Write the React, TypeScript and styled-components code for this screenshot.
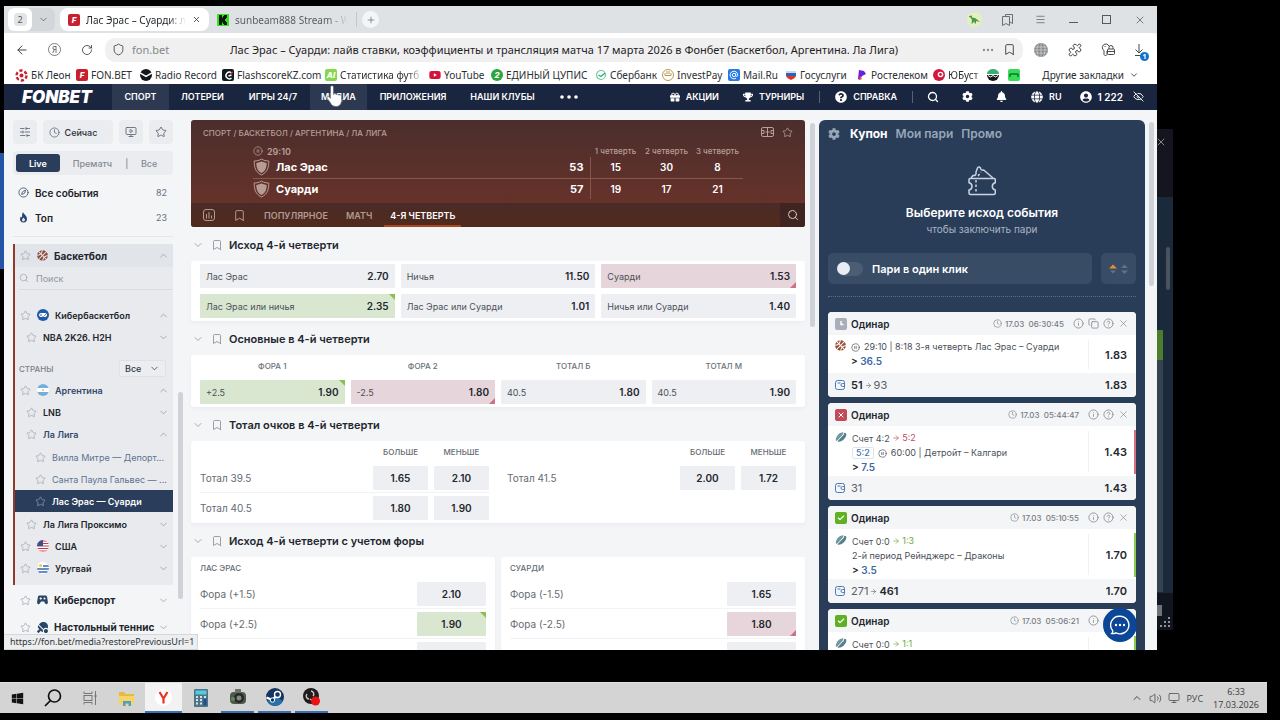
import React from 'react';
import styled, { createGlobalStyle, css } from 'styled-components';
import {
  SlidersHorizontal, Clock, Star, Compass, ChevronUp, ChevronDown, Search, Bookmark, EyeOff, Info, Copy, X, ArrowLeft,
  RotateCw, Shield, Menu, Minus, Square, Puzzle, MonitorPlay, CirclePause, Plus, Ellipsis, Check,
  ArrowRight, CircleHelp, Volume2, Monitor,
} from 'lucide-react';
import { FaGift, FaTrophy, FaQuestionCircle, FaUserCircle, FaCog, FaBell, FaGlobe, FaGamepad, FaTableTennis, FaBasketballBall, FaWindows, FaYoutube } from 'react-icons/fa';

const Global = createGlobalStyle`
  * { box-sizing: border-box; }
  body { margin: 0; background: #000; font-family: Inter, "Liberation Sans", sans-serif; color: #23272e; }
  button, input, select { font: inherit; color: inherit; border: 0; padding: 0; margin: 0; background: none; }
  a { color: inherit; text-decoration: none; }
  svg { display: block; flex: none; }
`;

/* ---------- desktop ---------- */

const Desktop = styled.div`
  position: relative;
  display: flex;
  flex-direction: column;
  height: 100vh;
  overflow: hidden;
`;
const BlueWindow = styled.div`
  position: absolute;
  left: 0;
  top: 153px;
  width: 5px;
  height: 116px;
  background: #2456a6;
`;
const BackWindow = styled.div`
  position: absolute;
  right: 107px;
  top: 129px;
  width: 90px;
  height: 501px;
  display: flex;
  flex-direction: column;
  align-items: flex-end;
  background: linear-gradient(#14151f 0 68px, #1b2a3b 68px 464px, #11151e 464px);
  color: #a9adb3;
`;
const BackClose = styled.div` padding: 7px 6px 0 0; height: 118px; `;
const BackThumb = styled.div` width: 4px; height: 43px; margin-right: 3px; border-radius: 2px; background: #4b525d; `;
const BackGreen = styled.div` width: 6px; height: 30px; margin: 40px 10px 0 0; background: #4c7d2c; `;
const BackStrip = styled.div` width: 6px; height: 232px; margin-right: 10px; background: #35424f; `;
const BackKey = styled.div` width: 5px; height: 11px; margin: 13px 11px 0 0; background: #6d7379; `;

const Browser = styled.main`
  position: relative;
  flex: 1;
  min-height: 0;
  margin: 6px 123px 0 4px;
  display: flex;
  flex-direction: column;
  overflow: hidden;
  background: #f3f5f7;
`;

/* ---------- browser chrome ---------- */

const TabStrip = styled.div`
  display: flex;
  align-items: center;
  height: 27px;
  padding: 0 9px 0 4px;
  background: #dee2e4;
  font: 10px "Noto Sans", "Liberation Sans", sans-serif;
  color: #55595d;
`;
const TabCount = styled.div`
  display: flex;
  width: 47px;
  height: 23px;
  border-radius: 6px;
  background: #d3d7da;
`;
const CountButton = styled.button`
  display: grid;
  place-items: center;
  width: 24px;
  border-radius: 6px;
  background: #fff;
  font-size: 9px;
  span { display: grid; place-items: center; width: 13px; height: 13px; border-radius: 4px; background: #e2e4e6; }
`;
const CountArrow = styled.button` display: grid; place-items: center; flex: 1; `;
const Tab = styled.a<{ $on?: boolean }>`
  display: flex;
  align-items: center;
  gap: 6px;
  width: ${p => (p.$on ? 149 : 147)}px;
  height: 23px;
  margin-left: ${p => (p.$on ? 5 : 0)}px;
  padding: 0 8px;
  border-radius: 8px;
  color: ${p => (p.$on ? '#26292c' : '#5a5e62')};
  ${p => p.$on && 'background: #fff;'}
`;
const Fade = styled.span`
  flex: 1;
  min-width: 0;
  overflow: hidden;
  white-space: nowrap;
  mask-image: linear-gradient(90deg, #000 82%, transparent);
`;
const NewTab = styled.button`
  display: grid;
  place-items: center;
  width: 17px;
  height: 17px;
  margin-left: 5px;
  border-radius: 50%;
  background: #f4f5f6;
`;
const TabDivider = styled.span` width: 1px; height: 15px; background: #c3c7ca; `;
const WindowButtons = styled.div`
  display: flex;
  align-items: center;
  gap: 16px;
  margin-left: auto;
  button { display: grid; place-items: center; width: 17px; height: 17px; }
`;
const AddressRow = styled.div`
  display: flex;
  align-items: center;
  height: 33px;
  padding-left: 9px;
  background: #fff;
  border-radius: 0 6px 0 0;
  color: #3b3f43;
  font: 11px "Noto Sans", "Liberation Sans", sans-serif;
`;
const ToolButton = styled.button<{ $w?: number }>`
  position: relative;
  display: grid;
  place-items: center;
  width: ${p => p.$w ?? 33}px;
  height: 24px;
`;
const AddressBar = styled.label`
  display: flex;
  align-items: center;
  flex: 1;
  height: 24px;
  margin-left: 8px;
  padding: 0 7px;
  border-radius: 10px;
  background: #f0f0f0;
`;
const Host = styled.span` display: flex; align-items: center; gap: 7px; width: 90px; color: #84878a; `;
const AddressInput = styled.input`
  flex: 1;
  min-width: 0;
  text-align: center;
  color: #1f2225;
`;
const AddressTools = styled.span` display: flex; justify-content: flex-end; align-items: center; gap: 8px; width: 90px; `;
const Badge = styled.span`
  position: absolute;
  right: 8px;
  bottom: 1px;
  width: 9px;
  height: 9px;
  border-radius: 50%;
  background: #1273cc;
  color: #fff;
  font-size: 7px;
  line-height: 9px;
  font-weight: 700;
`;
const Bookmarks = styled.nav`
  display: flex;
  align-items: center;
  height: 18px;
  padding: 0 18px 0 11px;
  background: #fff;
  font: 10px "Noto Sans", "Liberation Sans", sans-serif;
  color: #2c2f33;
`;
const Mark = styled.a<{ $w: number }>`
  display: flex;
  align-items: center;
  gap: 3px;
  width: ${p => p.$w}px;
  padding-right: 6px;
  white-space: nowrap;
`;
const MoreMarks = styled.a` display: flex; align-items: center; gap: 5px; margin-left: auto; `;
const Tile = styled.span<{ $bg: string; $round?: boolean; $size?: number }>`
  display: grid;
  place-items: center;
  flex: none;
  width: ${p => p.$size ?? 12}px;
  height: ${p => p.$size ?? 12}px;
  border-radius: ${p => (p.$round ? '50%' : '2px')};
  background: ${p => p.$bg};
  color: #fff;
  font: italic 800 8px/12px Inter, sans-serif;
`;

/* ---------- site navigation ---------- */

const Nav = styled.nav`
  display: flex;
  align-items: center;
  height: 26px;
  padding-right: 13px;
  background: #1a2640;
  color: #fff;
  font-size: 9px;
  font-weight: 600;
`;
const Logo = styled.a`
  width: 108px;
  padding-left: 18px;
  font-size: 17px;
  font-weight: 900;
  font-style: italic;
`;
const NavItem = styled.a<{ $w: number; $on?: boolean }>`
  display: grid;
  place-items: center;
  width: ${p => p.$w}px;
  height: 26px;
  padding-bottom: 1px;
  ${p => p.$on && 'background: #2c3950;'}
`;
const NavRight = styled.div`
  display: flex;
  align-items: center;
  margin-left: auto;
  padding-bottom: 1px;
`;
const NavLink = styled.a<{ $gap: number }>`
  display: flex;
  align-items: center;
  gap: 6px;
  margin-left: ${p => p.$gap}px;
`;
const Balance = styled.span` margin-right: 4px; font-size: 10px; `;
const NavLine = styled.span<{ $gap: number }>` width: 1px; height: 12px; margin-left: ${p => p.$gap}px; background: #56617a; `;
const HandCursor = styled.svg` position: absolute; left: 322px; top: 78px; `;

/* ---------- page body ---------- */

const Body = styled.div`
  display: flex;
  flex: 1;
  min-height: 0;
  padding-left: 9px;
`;
const Rail = styled.div<{ $top: number; $l: number; $r: number }>`
  flex: none;
  width: 5px;
  margin: 0 ${p => p.$r}px 0 ${p => p.$l}px;
  padding-top: ${p => p.$top}px;
`;
const Thumb = styled.div<{ $h: number }>` height: ${p => p.$h}px; border-radius: 3px; background: #cfd2d8; `;

const Side = styled.aside`
  flex: none;
  width: 160px;
  padding-top: 10px;
  color: #22262c;
`;
const SideTools = styled.div` display: flex; gap: 6px; `;
const SideTool = styled.button<{ $wide?: boolean }>`
  display: flex;
  align-items: center;
  justify-content: center;
  gap: 5px;
  ${p => (p.$wide ? 'flex: 1; padding-right: 10px;' : 'width: 24px;')}
  height: 24px;
  border-radius: 4px;
  background: #eaecf0;
  color: #5d6675;
  font-size: 9px;
  font-weight: 500;
  span { color: #2d3138; }
`;
const Segments = styled.div`
  display: flex;
  align-items: center;
  height: 24px;
  margin-top: 7px;
  padding: 3px;
  border-radius: 4px;
  background: #eaecf0;
  color: #858a93;
  font-size: 9px;
  font-weight: 500;
`;
const Segment = styled.button<{ $w: number; $on?: boolean }>`
  width: ${p => p.$w}px;
  height: 18px;
  border-radius: 3px;
  ${p => p.$on && 'background: #2a3e5b; color: #fff; font-weight: 600;'}
`;
const SideTop = styled.div` padding-top: 5px; height: 62px; border-bottom: 1px solid #e3e6ea; margin-bottom: 7px; `;
const TopRow = styled.a`
  display: flex;
  align-items: center;
  gap: 6px;
  height: 25px;
  padding: 0 6px 0 5px;
  font-size: 10px;
  font-weight: 600;
  color: #1f2329;
  small { margin-left: auto; font-size: 9px; font-weight: 400; color: #6b7079; }
`;
const Tree = styled.section`
  padding-bottom: 6px;
  border-left: 2px solid #8f3a2d;
  background: #e8eaee;
`;
const TreeRow = styled.div<{ $indent?: number; $tone?: 'blue' | 'soft' | 'active'; $h?: number; $big?: boolean }>`
  display: flex;
  align-items: center;
  gap: 6px;
  height: ${p => p.$h ?? 22}px;
  padding: 0 4px 0 ${p => 5 + (p.$indent ?? 0)}px;
  font-size: 9px;
  font-weight: 600;
  color: #22262c;
  a { flex: 1; min-width: 0; white-space: nowrap; }
  > svg:first-child { color: #a7acb5; }
  > svg:last-child { color: #8f959f; }
  ${p => p.$big && 'font-size: 10px; font-weight: 700;'}
  ${p => p.$tone === 'blue' && 'color: #33496b;'}
  ${p => p.$tone === 'soft' && 'color: #5f728f; font-weight: 400;'}
  ${p => p.$tone === 'active' && css`background: #2a3e5b; color: #fff; > svg:first-child { color: #8494ab; }`}
`;
const TreeHead = styled.div` background: #e1e4e9; `;
const SearchRow = styled.label`
  display: flex;
  align-items: center;
  gap: 7px;
  height: 23px;
  margin: 0 0 14px 4px;
  border-bottom: 1px solid #d9dce2;
  color: #a3a8b0;
  font-size: 9px;
  input { flex: 1; min-width: 0; }
  input::placeholder { color: #92979f; opacity: 1; }
`;
const Countries = styled.div`
  display: flex;
  align-items: center;
  justify-content: space-between;
  height: 31px;
  padding: 10px 7px 0 4px;
  font-size: 8px;
  font-weight: 500;
  color: #7a808a;
`;
const SelectBox = styled.label`
  display: flex;
  align-items: center;
  gap: 4px;
  height: 17px;
  padding: 0 5px;
  border: 1px solid #dee1e6;
  border-radius: 2px;
  background: #ebedf1;
  font-size: 9px;
  font-weight: 500;
  color: #33373e;
  select { appearance: none; width: 20px; }
`;
const Nested = styled.div` padding: 1px 0; `;
const Flag = styled.svg` border-radius: 50%; `;
const StatusUrl = styled.div`
  position: absolute;
  left: 0;
  bottom: 0;
  height: 16px;
  padding: 0 3px 0 6px;
  border: 1px solid #d5d8db;
  border-left: 0;
  background: #eceef0;
  font: 9px/14px "Noto Sans", "Liberation Sans", sans-serif;
  color: #303336;
`;

/* ---------- event ---------- */

const Event = styled.section` flex: 1; min-width: 0; padding-top: 10px; `;
const EventHead = styled.header`
  display: flex;
  flex-direction: column;
  height: 107px;
  border-radius: 3px;
  overflow: hidden;
  background: linear-gradient(#4b2e2c, #66322a 83px);
  color: #fff;
`;
const Crumbs = styled.div`
  display: flex;
  align-items: center;
  justify-content: space-between;
  height: 26px;
  padding: 0 12px;
  font-size: 8px;
  font-weight: 500;
  color: #b79e99;
  div { display: flex; gap: 8px; }
`;
const Score = styled.table`
  flex: 1;
  margin: 0 62px 4px;
  border-collapse: collapse;
  font-size: 10px;
  font-weight: 600;
  table-layout: fixed;
  th, td { padding: 0; }
  thead { height: 12px; font-size: 8px; color: #b79e99; }
  thead th { font-weight: 500; }
  thead th:nth-child(2) { width: 36px; }
  thead th:nth-child(n+3) { width: 51px; }
  tbody td { text-align: center; height: 21px; }
  tbody th { text-align: left; font-size: 11px; font-weight: 700; }
  tbody tr:first-child > * { border-bottom: 1px solid #87554c; }
  tbody td:nth-child(2) { text-align: right; padding-right: 6px; font-size: 11px; font-weight: 700; border-right: 1px solid #87554c; }
`;
const Inline = styled.span<{ $gap?: number }>` display: flex; align-items: center; gap: ${p => p.$gap ?? 4}px; `;
const GameClock = styled(Inline)` font-size: 9px; font-weight: 600; `;
const MarketTabs = styled.div`
  display: flex;
  align-items: center;
  height: 24px;
  padding-left: 12px;
  background: linear-gradient(#4b2b28, #502a1b);
  color: #b39a92;
  font-size: 9px;
  font-weight: 600;
`;
const MarketTab = styled.button<{ $on?: boolean }>`
  height: 24px;
  margin-left: 6px;
  padding: 2px 6px 0;
  border-bottom: 2px solid ${p => (p.$on ? '#a84a1e' : 'transparent')};
  color: ${p => (p.$on ? '#fff' : 'inherit')};
`;
const TabIcon = styled.button`
  width: 12px;
  margin-right: 18px;
  & + & { margin-right: 7px; }
`;
const TabSearch = styled.button`
  display: grid;
  place-items: center;
  width: 25px;
  height: 24px;
  margin-left: auto;
  background: #402422;
  color: #d8c9c5;
`;
const MarketTitle = styled.h2`
  display: flex;
  align-items: center;
  height: 34px;
  margin: 0;
  padding: 2px 0 0 1px;
  font-size: 11px;
  font-weight: 600;
  color: #23272e;
  svg { color: #8b9097; }
  svg + svg { margin: 0 6px 0 7px; }
`;
const Card = styled.div`
  flex: 1;
  padding: 0 9px;
  border-radius: 3px;
  background: #fff;
  box-shadow: 0 2px 4px #1a26400a;
`;
const OddsGrid = styled.div<{ $cols: number }>`
  display: grid;
  grid-template-columns: repeat(${p => p.$cols}, 1fr);
  gap: 6px;
  padding: 3px 0;
`;
const Labels = styled.div`
  display: grid;
  grid-template-columns: repeat(4, 1fr);
  gap: 6px;
  height: 22px;
  align-items: center;
  text-align: center;
  font-size: 8px;
  font-weight: 500;
  color: #6c7178;
`;
const Odd = styled.button<{ $move?: 'up' | 'down'; $solo?: boolean }>`
  position: relative;
  display: flex;
  align-items: center;
  justify-content: ${p => (p.$solo ? 'center' : 'space-between')};
  width: 100%;
  height: 24px;
  padding: 0 6px;
  border-radius: 1px;
  overflow: hidden;
  background: #eeeff2;
  color: #4b5057;
  font-size: 9px;
  b { font-size: 10px; font-weight: 600; color: #23272e; }
  ${p => p.$move === 'up' && css`background: #d9e7d1; &::after { content: ''; position: absolute; right: 0; top: 0; border: 3px solid; border-color: #8cbf52 #8cbf52 transparent transparent; }`}
  ${p => p.$move === 'down' && css`background: #e6d5da; &::after { content: ''; position: absolute; right: 0; bottom: 0; border: 3px solid; border-color: transparent #cc7285 #cc7285 transparent; }`}
`;
const Pair = styled.div<{ $gap: number }>` display: flex; gap: ${p => p.$gap}px; align-items: flex-start; `;
const OddsTable = styled.table<{ $w: number }>`
  flex: 1;
  width: 100%;
  border-collapse: separate;
  border-spacing: 0;
  font-size: 10px;
  color: #666b72;
  th, td { padding: 0; font-weight: 400; }
  thead th { height: 22px; font-size: 8px; font-weight: 500; }
  tbody th { text-align: left; }
  tbody tr > * { height: 30px; border-bottom: 1px solid #f2f3f5; }
  tbody tr:last-child > * { border-color: transparent; }
  td, thead th:not(:first-child) { width: ${p => p.$w + 6}px; padding-left: 6px; }
  thead th:first-child { text-align: left; }
`;

/* ---------- coupon ---------- */

const Coupon = styled.aside`
  flex: none;
  width: 326px;
  margin-top: 10px;
  padding: 0 9px;
  border-radius: 6px 6px 0 0;
  background: #293d59;
  color: #fff;
`;
const CouponTabs = styled.div`
  display: flex;
  align-items: center;
  gap: 8px;
  height: 27px;
  font-size: 12px;
  font-weight: 600;
  color: #98a5b6;
  svg { margin-right: 2px; }
  button[aria-current] { color: #fff; font-weight: 700; }
`;
const Empty = styled.div`
  display: flex;
  flex-direction: column;
  align-items: center;
  height: 106px;
  padding-top: 19px;
  color: #a9b5c4;
  font-size: 10px;
  h3 { margin: 8px 0 1px; font-size: 12px; line-height: 18px; font-weight: 600; color: #fff; }
`;
const OneClick = styled.div`
  display: flex;
  gap: 9px;
  padding-bottom: 12px;
  border-bottom: 1px dotted #5d6f87;
`;
const OneClickBox = styled.label`
  display: flex;
  align-items: center;
  gap: 9px;
  flex: 1;
  height: 31px;
  padding: 0 9px;
  border-radius: 5px;
  background: #384c66;
  font-size: 11px;
  font-weight: 600;
`;
const Toggle = styled.input`
  appearance: none;
  width: 26px;
  height: 14px;
  border-radius: 7px;
  background: #4b5d75;
  &::before { content: ''; display: block; width: 13px; height: 13px; border-radius: 50%; background: #e8edf5; }
`;
const SortButton = styled.button`
  display: flex;
  align-items: center;
  justify-content: center;
  width: 35px;
  border-radius: 5px;
  background: #384c66;
`;
const Bets = styled.div`
  display: flex;
  flex-direction: column;
  gap: 6px;
  padding-top: 15px;
`;
const Bet = styled.article` border-radius: 4px; overflow: hidden; background: #fff; color: #23272e; `;
const BetBar = styled.div`
  display: flex;
  align-items: center;
  gap: 4px;
  height: 23px;
  padding: 0 7px;
  background: #f4f5f7;
  font-size: 10px;
  font-weight: 600;
  svg { color: #858a92; }
  time { display: flex; align-items: center; gap: 3px; margin-left: auto; margin-right: 5px; font-size: 8px; font-weight: 500; color: #777c85; white-space: pre; }
`;
const BetMark = styled.span<{ $c: string }>`
  display: grid;
  place-items: center;
  width: 12px;
  height: 12px;
  border-radius: 2px;
  background: ${p => p.$c};
  svg { color: #fff; }
`;
const BetMain = styled.div<{ $h: number; $side?: string }>`
  display: flex;
  height: ${p => p.$h}px;
  padding: 5px 0 0 7px;
  ${p => p.$side && css`background: linear-gradient(${p.$side}, ${p.$side}) right 4px / 2px 44px no-repeat;`}
`;
const BetLines = styled.div`
  flex: 1;
  padding-left: 5px;
  font-size: 9px;
  line-height: 14px;
  color: #4a4f57;
  strong { display: block; font-size: 10px; font-weight: 600; color: #3d67a5; }
  strong i { color: #23272e; font-style: normal; }
`;
const Shift = styled.span<{ $c: string }>` display: inline-flex; align-items: center; gap: 2px; color: ${p => p.$c}; `;
const Chip = styled.span` padding: 0 3px; border: 1px solid #e0e4ea; border-radius: 2px; line-height: 10px; color: #4476b8; font-weight: 500; `;
const BetOdd = styled.div`
  display: flex;
  align-items: center;
  justify-content: flex-end;
  width: 48px;
  padding-right: 9px;
  margin-bottom: 4px;
  border-left: 1px solid #f0f1f3;
  font-size: 11px;
  font-weight: 600;
`;
const BetFoot = styled(BetBar)`
  justify-content: space-between;
  height: 24px;
  padding-right: 9px;
  font-size: 11px;
  svg { color: #4a78bb; }
  span span { display: flex; align-items: center; gap: 2px; }
  span span svg { color: #5b6068; }
  i { font-style: normal; font-weight: 400; color: #5b6068; }
`;
const ChatButton = styled.button`
  position: absolute;
  right: 20px;
  bottom: 8px;
  display: grid;
  place-items: center;
  width: 34px;
  height: 34px;
  border-radius: 50%;
  background: #0b4697;
`;

/* ---------- taskbar ---------- */

const Taskbar = styled.footer`
  display: flex;
  align-items: center;
  height: 31px;
  margin: 32px 13px 7px 0;
  padding-right: 8px;
  background: #d4d4d4;
  border-top: 1px solid #e2e2e2;
  font: 9px "Open Sans", "Liberation Sans", sans-serif;
  color: #3c3c3c;
`;
const Task = styled.button<{ $run?: boolean; $on?: boolean }>`
  display: grid;
  place-items: center;
  width: ${p => (p.$run ? 33 : 37)}px;
  height: 30px;
  margin: 0 ${p => (p.$run ? 2 : 0)}px;
  ${p => p.$on && 'background: #f2f2f2;'}
  ${p => (p.$run || p.$on) && 'border-bottom: 2px solid #3c70b5;'}
  &:first-child { width: 34px; }
`;
const Tray = styled.div` display: flex; align-items: center; gap: 6px; margin-left: auto; color: #4a4a4a; `;
const DateTime = styled.time` margin-left: 4px; line-height: 13px; text-align: center; color: #3c3c3c; `;

/* ---------- drawings ---------- */

const FlagOf = ({ name }: { name: 'ar' | 'us' | 'uy' }) => (
  <Flag width="12" height="12" viewBox="0 0 12 12">
    <rect width="12" height="12" fill="#fff" />
    {name === 'ar' && <><rect width="12" height="4" fill="#72aee0" /><rect y="8" width="12" height="4" fill="#72aee0" /><circle cx="6" cy="6" r="1" fill="#e8b740" /></>}
    {name === 'us' && <><path d="M0 1h12M0 3.5h12M0 6h12M0 8.5h12M0 11h12" stroke="#c53a4b" strokeWidth="1.2" /><rect width="6" height="6" fill="#3c4f86" /></>}
    {name === 'uy' && <><path d="M0 4h12M0 7h12M0 10h12" stroke="#3768b4" strokeWidth="1.4" /><rect width="6" height="5.5" fill="#fff" /><circle cx="3.5" cy="3.5" r="1.5" fill="#f0c93c" /></>}
  </Flag>
);
const Cyber = () => (
  <Tile $bg="#1f5ba8" $round><FaGamepad size={8} /></Tile>
);
const Pad = () => (
  <svg width="11" height="10" viewBox="0 0 11 10"><path d="M2.500 .5h6c1 0 1.400.6 1.600 1.500l.8 5c.2 2-1.600 3-2.700 1.600L7 6.500H4L2.800 8.600C1.700 10 0 9 .1 7l.8-5C1.100 1.100 1.500.5 2.500.5z" fill="#2b4568" /><path d="M2.500 3.500h2.400M3.700 2.300v2.400" stroke="#fff" strokeWidth=".9" /><circle cx="7.500" cy="3.500" r="1" fill="#fff" /></svg>
);
const Puck = () => (
  <svg width="12" height="12" viewBox="0 0 12 12"><path d="M.8 9.200C.8 5.500 4 1.500 8.300 1.300c.4 1-.5 2.600-1.800 3.800L2.300 9.600c-.5.400-1.500.3-1.500-.4z" fill="#6f98a1" /><path d="M3 10.800c-.6-.3-.2-1 .5-1.500l4-4.200c1-1.100 1.700-2 1.700-3.200 1.600-.2 2.300.7 2.100 2.200-.6 3.600-4.800 7.200-8.300 6.700z" fill="#557f8c" /></svg>
);
const TeamShield = () => (
  <svg width="17" height="18" viewBox="0 0 17 18"><path d="M8.500 1C6.500 2.500 3.500 3 1.200 3c0 6 1 11 7.300 14 6.300-3 7.300-8 7.300-14-2.300 0-5.300-.5-7.300-2z" fill="none" stroke="#b79c95" /><path d="M8.500 3.300C7 4.300 5 4.700 3.300 4.900c.1 4.500 1.200 8 5.200 10.200 4-2.200 5.100-5.700 5.200-10.200C12 4.700 10 4.300 8.500 3.300z" fill="#b79c95" /></svg>
);
const Ticket = () => (
  <svg width="28" height="30" viewBox="0 0 28 30" fill="none" stroke="#c9d4e2" strokeWidth="1.500" strokeLinejoin="round">
    <path d="M2 12.500h24c1 0 1.300.5 1.300 1.300v3c-4 1-4 6.200 0 7.200v3c0 1-.5 1.500-1.500 1.500H2.500C1.500 28.500 1 28 1 27v-3c4-1 4-6.200 0-7.200v-3c0-.8.300-1.300 1-1.300z" />
    <path d="M3 12l2-2.500c2 .5 3.600-1 3-3.500L9.500 2c1-1.200 2-1.200 3 0 0 2 2 2.500 3.200 2L25 12" /><path d="M8 14v13M10 10l3-4" strokeDasharray="2.500 2" />
  </svg>
);
const Stats = () => (
  <svg width="12" height="12" viewBox="0 0 12 12" fill="none" stroke="currentColor"><rect x=".5" y=".5" width="11" height="11" rx="2.500" /><path d="M3.500 5v4.500M6 3v6.500M8.500 6.500v3" /></svg>
);
const Field = () => (
  <svg width="13" height="10" viewBox="0 0 13 10" fill="none" stroke="currentColor"><rect x=".5" y=".5" width="12" height="9" rx="1.500" /><path d="M6.500 .5v9M.5 3.500h2.500v3H.5M12.500 3.500H10v3h2.500M4.500 5h4" /></svg>
);
const ChatIcon = () => (
  <svg width="20" height="20" viewBox="0 0 20 20"><path d="M10 1.200a8.800 8.800 0 1 1-4 16.600c-1.200.7-2.800 1-4.300.8.9-1 1.200-2 1-3A8.800 8.800 0 0 1 10 1.200z" fill="none" stroke="#fff" strokeWidth="1.400" /><circle cx="6" cy="10" r="1.200" fill="#fff" /><circle cx="10" cy="10" r="1.200" fill="#fff" /><circle cx="14" cy="10" r="1.200" fill="#fff" /></svg>
);
const WalletIcon = () => (
  <svg width="10" height="10" viewBox="0 0 10 10" fill="none" stroke="currentColor"><rect x=".5" y=".5" width="9" height="9" rx="2" /><path d="M2.500 3h3M9.500 3.500H7.500a1.500 1.500 0 0 0 0 3h2" /></svg>
);
const HelpBubble = () => <CircleHelp size={11} strokeWidth={1.8} />;
const StarIcon = ({ size = 11 }: { size?: number }) => <Star size={size} strokeWidth={1.8} />;
const Down = () => <ChevronDown size={11} strokeWidth={1.6} />;
const Up = () => <ChevronUp size={11} strokeWidth={1.6} />;

/* ---------- sections ---------- */

const Chrome = () => (
  <>
    <TabStrip>
      <TabCount>
        <CountButton aria-label="Вкладки"><span>2</span></CountButton>
        <CountArrow aria-label="Список"><ChevronDown size={11} strokeWidth={1.6} /></CountArrow>
      </TabCount>
      <Tab href="#" $on><Tile $bg="#c8202f">F</Tile><Fade>Лас Эрас – Суарди: ла</Fade><X size={9} /></Tab>
      <Tab href="#">
        <svg width="12" height="12" viewBox="0 0 12 12"><rect width="12" height="12" fill="#39e01f" /><path d="M2 1h3v2.500h1V2h1V1h3v3H9v1H8v2h1v1h1v3H7v-1H6V8.500H5V11H2z" fill="#0b1a0b" /></svg>
        <Fade>sunbeam888 Stream - Wa</Fade>
      </Tab>
      <TabDivider />
      <NewTab aria-label="Новая вкладка"><Plus size={10} strokeWidth={1.500} /></NewTab>
      <WindowButtons>
        <button aria-label="Профиль"><Tile $bg="#e5efbf" $round $size={15}><svg width="11" height="9" viewBox="0 0 11 9"><path d="M0 1l3-.5v2L6 3l2 1.500 3 2.500-4-1v2.500H6L5 6.500 3.500 8.500h-1L3 5 1.500 2.500 0 2z" fill="#4a9a4b" /></svg></Tile></button>
        <button aria-label="Коллекции"><svg width="11" height="12" viewBox="0 0 11 12" fill="none" stroke="#6b6f73"><path d="M3.500 2.500V.5h7v9l-2.500-1.500M.5 2.500h7v9L4 9.500.5 11.500z" /></svg></button>
        <button aria-label="Меню"><Menu size={11} strokeWidth={1.5} /></button>
        <button aria-label="Свернуть"><svg width="9" height="9" viewBox="0 0 9 9"><path d="M0 7.500h9" stroke="currentColor" /></svg></button>
        <button aria-label="Развернуть"><svg width="9" height="9" viewBox="0 0 9 9"><rect x=".5" y=".5" width="8" height="8" fill="none" stroke="currentColor" /></svg></button>
        <button aria-label="Закрыть"><X size={12} strokeWidth={1.5} /></button>
      </WindowButtons>
    </TabStrip>
    <AddressRow>
      <ToolButton $w={18} aria-label="Назад"><ArrowLeft size={14} strokeWidth={1.7} /></ToolButton>
      <ToolButton $w={46} aria-label="Яндекс"><svg width="13" height="13" viewBox="0 0 13 13"><circle cx="6.500" cy="6.500" r="6" fill="none" stroke="#7b7e82" /><text x="6.500" y="9.500" fontSize="8" textAnchor="middle" fill="#4b4e52">Я</text></svg></ToolButton>
      <ToolButton $w={20} aria-label="Обновить"><RotateCw size={12} strokeWidth={1.7} /></ToolButton>
      <AddressBar>
        <Host><Shield size={13} strokeWidth={1.7} color="#4b4e52" />fon.bet</Host>
        <AddressInput aria-label="Адрес" defaultValue="Лас Эрас – Суарди: лайв ставки, коэффициенты и трансляция матча 17 марта 2026 в Фонбет (Баскетбол, Аргентина. Ла Лига)" />
        <AddressTools><Ellipsis size={14} color="#85888b" /><Bookmark size={13} strokeWidth={1.7} /></AddressTools>
      </AddressBar>
      <ToolButton $w={35} aria-label="Язык"><svg width="14" height="14" viewBox="0 0 14 14"><circle cx="7" cy="7" r="7" fill="#86898c" /><path d="M0 7h14M7 0v14M1 4h12M1 10h12M4.500 1c-2 4-2 8 0 12M9.500 1c2 4 2 8 0 12" stroke="#d6d8da" strokeWidth=".7" fill="none" /></svg></ToolButton>
      <ToolButton aria-label="Расширения"><Puzzle size={14} strokeWidth={1.7} /></ToolButton>
      <ToolButton aria-label="Пароли"><svg width="14" height="14" viewBox="0 0 14 14" fill="none" stroke="#44474b"><path d="M3 7.500A3.500 3.500 0 1 1 8 3M3 7.500v4l1.500 1.500 1.500-1.500V8M3.500 3.500h1" /><rect x="6.500" y="6" width="7" height="5.500" rx="1" /><path d="M8 6V4.500A2 2 0 0 1 12 4.500V6M6.500 8.500h7" /></svg></ToolButton>
      <ToolButton aria-label="Загрузки"><svg width="11" height="13" viewBox="0 0 11 13" fill="none" stroke="#44474b"><path d="M4 1v9M.5 6.500L4 10l3.500-3.500M0 12.500h6" /></svg><Badge>1</Badge></ToolButton>
    </AddressRow>
    <Bookmarks>
      <Mark href="#" $w={61}><svg width="13" height="13" viewBox="0 0 13 13"><circle cx="6.500" cy="6.500" r="5" fill="none" stroke="#c9202f" strokeWidth="2.400" strokeDasharray="3.200 2" /><circle cx="6.500" cy="6.500" r="2" fill="#c9202f" /></svg>БК Леон</Mark>
      <Mark href="#" $w={64}><Tile $bg="#c8202f">F</Tile>FON.BET</Mark>
      <Mark href="#" $w={82}><svg width="12" height="12" viewBox="0 0 12 12"><circle cx="6" cy="6" r="6" fill="#15181b" /><path d="M0 4l6 3.500L12 4" stroke="#fff" strokeWidth="1.500" fill="none" /></svg>Radio Record</Mark>
      <Mark href="#" $w={103}><Tile $bg="#0f1c24"><svg width="9" height="9" viewBox="0 0 9 9"><path d="M7.500 2A3.300 3.300 0 1 0 7.500 7M4.500 5l3-1" stroke="#fff" strokeWidth="1.500" fill="none" /><path d="M6 3l3-2" stroke="#d8263a" strokeWidth="1.400" /></svg></Tile>FlashscoreKZ.com</Mark>
      <Mark href="#" $w={104}><Tile $bg="#86d84a">AI</Tile><Fade>Статистика футб</Fade></Mark>
      <Mark href="#" $w={62}><FaYoutube size={12} color="#d7123a" />YouTube</Mark>
      <Mark href="#" $w={104}><Tile $bg="#2aa63c" $round>2</Tile>ЕДИНЫЙ ЦУПИС</Mark>
      <Mark href="#" $w={67}><svg width="12" height="12" viewBox="0 0 12 12" fill="none" strokeWidth="1.200"><circle cx="6" cy="6" r="4.500" stroke="#6cc7b4" /><path d="M3.500 6L6 7.500 10 4" stroke="#37ab4b" /></svg>Сбербанк</Mark>
      <Mark href="#" $w={66}><svg width="12" height="12" viewBox="0 0 12 12" fill="none" stroke="#b99a52"><circle cx="6" cy="6" r="5.500" /><path d="M3 4v2.500h6V4M5 2v3M7 2v3" /></svg>InvestPay</Mark>
      <Mark href="#" $w={57}><Tile $bg="#2779e8"><svg width="10" height="10" viewBox="0 0 10 10" fill="none" stroke="#fff"><circle cx="5" cy="5" r="1.700" /><path d="M6.700 3.500v2c0 1.500 2 1.200 2-.5A3.800 3.800 0 1 0 7 8.200" /></svg></Tile>Mail.Ru</Mark>
      <Mark href="#" $w={71}><svg width="12" height="12" viewBox="0 0 12 12"><path d="M1 2h10v3H1z" fill="#cfd6e4" /><path d="M1 4h10v3H1z" fill="#2e62b5" /><path d="M1 7h10c-1 2.500-3 3-5 4-2-1-4-1.500-5-4z" fill="#d8352e" /></svg>Госуслуги</Mark>
      <Mark href="#" $w={77}><svg width="12" height="12" viewBox="0 0 12 12"><path d="M3 1l5 1 2 3-4 2-2 4-2-1z" fill="#6a1fe0" /><path d="M3 11l3-1-2-3z" fill="#f0562b" /></svg>Ростелеком</Mark>
      <Mark href="#" $w={54}><svg width="12" height="12" viewBox="0 0 12 12"><circle cx="6" cy="6" r="6" fill="#d5173f" /><circle cx="7.500" cy="5.500" r="2.800" fill="#fff" /><circle cx="7.500" cy="5.500" r="1.400" fill="#d5173f" /></svg><Fade>ЮБуст</Fade></Mark>
      <Mark href="#" $w={21} aria-label="Чат"><svg width="12" height="12" viewBox="0 0 12 12"><path d="M0 5a6 5 0 0 1 12 0z" fill="#35b06f" /><path d="M0 6h12a6 6 0 0 1-12 0z" fill="#141819" /><path d="M1 6.500l2.500 1.500L6 6.500 8.500 8 11 6.500" stroke="#fff" fill="none" /></svg></Mark>
      <Mark href="#" $w={18} aria-label="Площадка"><Tile $bg="#35dc58"><svg width="10" height="6" viewBox="0 0 10 6"><path d="M1 5V2h8v3" stroke="#133c1c" fill="none" /></svg></Tile></Mark>
      <MoreMarks href="#">Другие закладки<ChevronDown size={10} /></MoreMarks>
    </Bookmarks>
  </>
);

const SiteNav = () => (
  <Nav>
    <Logo href="#">FONBET</Logo>
    <NavItem href="#" $w={57} $on>СПОРТ</NavItem>
    <NavItem href="#" $w={67}>ЛОТЕРЕИ</NavItem>
    <NavItem href="#" $w={74}>ИГРЫ 24/7</NavItem>
    <NavItem href="#" $w={57} $on>МЕДИА</NavItem>
    <NavItem href="#" $w={92}>ПРИЛОЖЕНИЯ</NavItem>
    <NavItem href="#" $w={87}>НАШИ КЛУБЫ</NavItem>
    <NavItem href="#" $w={46} aria-label="Ещё"><svg width="18" height="4" viewBox="0 0 18 4" fill="#fff"><circle cx="2" cy="2" r="1.800" /><circle cx="9" cy="2" r="1.800" /><circle cx="16" cy="2" r="1.800" /></svg></NavItem>
    <NavRight>
      <NavLink href="#" $gap={0}><FaGift size={10} />АКЦИИ</NavLink>
      <NavLink href="#" $gap={24}><FaTrophy size={10} />ТУРНИРЫ</NavLink>
      <NavLine $gap={15} />
      <NavLink href="#" $gap={15}><FaQuestionCircle size={12} />СПРАВКА</NavLink>
      <NavLine $gap={15} />
      <NavLink href="#" $gap={14} aria-label="Поиск"><Search size={12} strokeWidth={2.6} /></NavLink>
      <NavLink href="#" $gap={23} aria-label="Настройки"><FaCog size={11} /></NavLink>
      <NavLink href="#" $gap={23} aria-label="Уведомления"><FaBell size={11} /></NavLink>
      <NavLink href="#" $gap={24}><FaGlobe size={12} />RU</NavLink>
      <NavLink href="#" $gap={18}><FaUserCircle size={12} /><Balance>1 222</Balance><EyeOff size={11} /></NavLink>
    </NavRight>
  </Nav>
);

const Sidebar = () => (
  <Side>
    <SideTools>
      <SideTool aria-label="Фильтр"><SlidersHorizontal size={12} strokeWidth={1.7} /></SideTool>
      <SideTool $wide><Clock size={11} strokeWidth={1.7} /><span>Сейчас</span></SideTool>
      <SideTool aria-label="Трансляции"><MonitorPlay size={12} strokeWidth={1.7} /></SideTool>
      <SideTool aria-label="Избранное"><StarIcon size={12} /></SideTool>
    </SideTools>
    <Segments><Segment $w={44} $on>Live</Segment><Segment $w={66}>Прематч</Segment>|<Segment $w={42}>Все</Segment></Segments>
    <SideTop>
      <TopRow href="#"><Compass size={11} strokeWidth={1.8} color="#3b4d69" />Все события<small>82</small></TopRow>
      <TopRow href="#"><svg width="11" height="11" viewBox="0 0 11 11"><path d="M5 0c.5 2 4 3.500 4 6.800A3.600 3.600 0 0 1 5.500 10.500 3.600 3.600 0 0 1 2 7c0-1.300.5-2 1-2.500.2.700.6 1 1 1C4.200 3.500 3.800 2 5 0z" fill="#27466f" /><path d="M5.500 5.500c1 1.200 1.500 1.800 1.500 2.600A1.500 1.500 0 0 1 5.500 9.500 1.500 1.500 0 0 1 4 8c0-1 .8-1.500 1.500-2.500z" fill="#dfe6ef" /></svg>Топ<small>23</small></TopRow>
    </SideTop>
    <Tree>
      <TreeHead><TreeRow $h={23} $big><StarIcon /><FaBasketballBall size={11} color="#8e4b39" /><a href="#">Баскетбол</a><Up /></TreeRow></TreeHead>
      <SearchRow><Search size={10} strokeWidth={1.8} /><input placeholder="Поиск" aria-label="Поиск" /></SearchRow>
      <TreeRow><StarIcon /><Cyber /><a href="#">Кибербаскетбол</a><Up /></TreeRow>
      <TreeRow $indent={6}><StarIcon /><a href="#">NBA 2K26. H2H</a><Down /></TreeRow>
      <Countries>СТРАНЫ<SelectBox><select aria-label="Страны"><option>Все</option></select><Down /></SelectBox></Countries>
      <TreeRow $tone="blue"><StarIcon /><FlagOf name="ar" /><a href="#">Аргентина</a><Up /></TreeRow>
      <TreeRow $indent={6}><StarIcon /><a href="#">LNB</a><Down /></TreeRow>
      <TreeRow $indent={6} $tone="blue"><StarIcon /><a href="#">Ла Лига</a><Up /></TreeRow>
      <Nested>
        <TreeRow $indent={15} $tone="soft"><StarIcon /><a href="#">Вилла Митре — Депорт...</a></TreeRow>
        <TreeRow $indent={15} $tone="soft"><StarIcon /><a href="#">Санта Паула Гальвес — ...</a></TreeRow>
        <TreeRow $indent={15} $tone="active"><StarIcon /><a href="#">Лас Эрас — Суарди</a></TreeRow>
      </Nested>
      <TreeRow $indent={6}><StarIcon /><a href="#">Ла Лига Проксимо</a><Down /></TreeRow>
      <TreeRow><StarIcon /><FlagOf name="us" /><a href="#">США</a><Down /></TreeRow>
      <TreeRow><StarIcon /><FlagOf name="uy" /><a href="#">Уругвай</a><Down /></TreeRow>
    </Tree>
    <TreeRow $h={30} $big $indent={2}><StarIcon /><Pad /><a href="#">Киберспорт</a><Down /></TreeRow>
    <TreeRow $h={24} $big $indent={2}><StarIcon /><FaTableTennis size={11} color="#2b4568" /><a href="#">Настольный теннис</a><Down /></TreeRow>
  </Side>
);

const Title = ({ children }: { children: React.ReactNode }) => (
  <MarketTitle><ChevronDown size={12} strokeWidth={1.5} /><Bookmark size={12} strokeWidth={1.7} />{children}</MarketTitle>
);

type Move = 'up' | 'down' | undefined;
const outcomes: [string, string, Move?][] = [
  ['Лас Эрас', '2.70'], ['Ничья', '11.50'], ['Суарди', '1.53', 'down'],
  ['Лас Эрас или ничья', '2.35', 'up'], ['Лас Эрас или Суарди', '1.01'], ['Ничья или Суарди', '1.40'],
];
const mains: [string, string, Move?][] = [['+2.5', '1.90', 'up'], ['-2.5', '1.80', 'down'], ['40.5', '1.80'], ['40.5', '1.90']];

const Totals = ({ rows }: { rows: [string, string, string][] }) => (
  <OddsTable $w={55}>
    <thead><tr><th /><th>БОЛЬШЕ</th><th>МЕНЬШЕ</th></tr></thead>
    <tbody>{rows.map(r => <tr key={r[0]}><th>{r[0]}</th><td><Odd $solo><b>{r[1]}</b></Odd></td><td><Odd $solo><b>{r[2]}</b></Odd></td></tr>)}</tbody>
  </OddsTable>
);
const Handicap = ({ team, rows }: { team: string; rows: [string, string, Move?][] }) => (
  <Card>
    <OddsTable $w={69}>
      <thead><tr><th>{team}</th><th /></tr></thead>
      <tbody>{rows.map(r => <tr key={r[0]}><th>{r[0]}</th><td><Odd $solo $move={r[2]}><b>{r[1]}</b></Odd></td></tr>)}</tbody>
    </OddsTable>
  </Card>
);

const EventView = () => (
  <Event>
    <EventHead>
      <Crumbs>СПОРТ / БАСКЕТБОЛ / АРГЕНТИНА / ЛА ЛИГА<div><Field /><StarIcon /></div></Crumbs>
      <Score>
        <thead><tr><th><GameClock><CirclePause size={10} strokeWidth={1.8} />29:10</GameClock></th><th /><th>1 четверть</th><th>2 четверть</th><th>3 четверть</th></tr></thead>
        <tbody>
          <tr><th><Inline $gap={6}><TeamShield />Лас Эрас</Inline></th><td>53</td><td>15</td><td>30</td><td>8</td></tr>
          <tr><th><Inline $gap={6}><TeamShield />Суарди</Inline></th><td>57</td><td>19</td><td>17</td><td>21</td></tr>
        </tbody>
      </Score>
      <MarketTabs>
        <TabIcon aria-label="Статистика"><Stats /></TabIcon>
        <TabIcon aria-label="Закладки"><Bookmark size={13} strokeWidth={1.8} /></TabIcon>
        <MarketTab>ПОПУЛЯРНОЕ</MarketTab><MarketTab>МАТЧ</MarketTab><MarketTab $on>4-Я ЧЕТВЕРТЬ</MarketTab>
        <TabSearch aria-label="Поиск"><Search size={12} strokeWidth={2} /></TabSearch>
      </MarketTabs>
    </EventHead>
    <Title>Исход 4-й четверти</Title>
    <Card><OddsGrid $cols={3}>{outcomes.map(o => <Odd key={o[0]} $move={o[2]}>{o[0]}<b>{o[1]}</b></Odd>)}</OddsGrid></Card>
    <Title>Основные в 4-й четверти</Title>
    <Card>
      <Labels><span>ФОРА 1</span><span>ФОРА 2</span><span>ТОТАЛ Б</span><span>ТОТАЛ М</span></Labels>
      <OddsGrid $cols={4}>{mains.map((o, i) => <Odd key={i} $move={o[2]}>{o[0]}<b>{o[1]}</b></Odd>)}</OddsGrid>
    </Card>
    <Title>Тотал очков в 4-й четверти</Title>
    <Card><Pair $gap={18}><Totals rows={[['Тотал 39.5', '1.65', '2.10'], ['Тотал 40.5', '1.80', '1.90']]} /><Totals rows={[['Тотал 41.5', '2.00', '1.72']]} /></Pair></Card>
    <Title>Исход 4-й четверти с учетом форы</Title>
    <Pair $gap={6}>
      <Handicap team="ЛАС ЭРАС" rows={[['Фора (+1.5)', '2.10'], ['Фора (+2.5)', '1.90', 'up'], ['Фора (+3.5)', '1.70']]} />
      <Handicap team="СУАРДИ" rows={[['Фора (-1.5)', '1.65'], ['Фора (-2.5)', '1.80', 'down'], ['Фора (-3.5)', '2.00']]} />
    </Pair>
  </Event>
);

type BetProps = { time: string; mark: 'wait' | 'lost' | 'won'; odd: string; copy?: boolean; foot: React.ReactNode; h?: number; children: React.ReactNode };
const marks = { wait: '#a9aeb8', lost: '#c24a59', won: '#5fb022' };
const sides = { wait: undefined, lost: '#d9707f', won: '#8bcb50' };
const BetCard = ({ time, mark, odd, copy, foot, h = 50, children }: BetProps) => (
  <Bet>
    <BetBar>
      <BetMark $c={marks[mark]}>{mark === 'wait' ? <svg width="8" height="8" viewBox="0 0 8 8"><path d="M4 1v3.500h2.500" fill="none" stroke="#fff" strokeWidth="1.400" /></svg> : mark === 'lost' ? <X size={8} strokeWidth={3} /> : <Check size={8} strokeWidth={3.5} />}</BetMark>
      Одинар
      <time><Clock size={9} strokeWidth={1.8} />{time}</time>
      <Info size={11} strokeWidth={1.8} />{copy && <Copy size={11} strokeWidth={1.8} />}<HelpBubble /><X size={11} strokeWidth={1.5} />
    </BetBar>
    <BetMain $h={h} $side={sides[mark]}>
      {mark === 'wait' ? <FaBasketballBall size={11} color="#9a4a33" /> : <Puck />}
      <BetLines>{children}</BetLines>
      <BetOdd>{odd}</BetOdd>
    </BetMain>
    <BetFoot><Inline $gap={6}><WalletIcon /><span>{foot}</span></Inline>{odd}</BetFoot>
  </Bet>
);

const CouponView = () => (
  <Coupon>
    <CouponTabs><FaCog size={12} /><button aria-current="true">Купон</button><button>Мои пари</button><button>Промо</button></CouponTabs>
    <Empty><Ticket /><h3>Выберите исход события</h3>чтобы заключить пари</Empty>
    <OneClick>
      <OneClickBox><Toggle type="checkbox" />Пари в один клик</OneClickBox>
      <SortButton aria-label="Изменение коэффициентов"><svg width="20" height="12" viewBox="0 0 20 12"><path d="M0 5.500l4-4 4 4z" fill="#e0902f" /><path d="M1 7.500h6l-3 3zM12 5l3.500-3.500L19 5zM12 7.500h7L15.500 11z" fill="#60728a" /></svg></SortButton>
    </OneClick>
    <Bets>
      <BetCard mark="wait" time="17.03  06:30:45" odd="1.83" copy h={38} foot={<>51<ArrowRight size={7} /><i>93</i></>}>
        <Inline><CirclePause size={9} strokeWidth={1.8} />29:10 | 8:18 3-я четверть Лас Эрас – Суарди</Inline><strong><i>&gt;</i> 36.5</strong>
      </BetCard>
      <BetCard mark="lost" time="17.03  05:44:47" odd="1.43" foot={<i>31</i>}>
        <div>Счет 4:2 <Shift $c="#c24a62"><ArrowRight size={8} />5:2</Shift></div>
        <Inline><Chip>5:2</Chip><CirclePause size={9} strokeWidth={1.8} />60:00 | Детройт – Калгари</Inline><strong><i>&gt;</i> 7.5</strong>
      </BetCard>
      <BetCard mark="won" time="17.03  05:10:55" odd="1.70" foot={<><i>271</i><ArrowRight size={7} />461</>}>
        <div>Счет 0:0 <Shift $c="#70a83a"><ArrowRight size={8} />1:3</Shift></div>
        <div>2-й период Рейнджерс – Драконы</div><strong><i>&gt;</i> 3.5</strong>
      </BetCard>
      <BetCard mark="won" time="17.03  05:06:21" odd="1.65" foot={<i>200</i>}>
        <div>Счет 0:0 <Shift $c="#70a83a"><ArrowRight size={8} />1:1</Shift></div>
      </BetCard>
    </Bets>
  </Coupon>
);

const TaskbarView = () => (
  <Taskbar>
    <Task aria-label="Пуск"><FaWindows size={13} color="#111" /></Task>
    <Task aria-label="Поиск"><svg width="18" height="18" viewBox="0 0 18 18" fill="none" stroke="#111" strokeWidth="1.700"><circle cx="10.500" cy="7" r="6" /><path d="M6.500 11.500L1 17" /></svg></Task>
    <Task aria-label="Представление задач"><svg width="14" height="14" viewBox="0 0 14 14" fill="none" stroke="#777"><path d="M1 .5v2h8v-2M1 13.500v-2h8v2M12.500 0v14" /><rect x="1" y="4.500" width="8" height="5" /><path d="M11 5h3" /></svg></Task>
    <Task aria-label="Проводник"><svg width="17" height="15" viewBox="0 0 17 15"><path d="M1 1h5l1.500 2H16v11H1z" fill="#e8b93c" /><path d="M1 5h15v9H1z" fill="#f6d568" /><path d="M5 15v-5h8v5h-2.500v-2.500h-3V15z" fill="#4d9ec9" /></svg></Task>
    <Task $on aria-label="Браузер"><svg width="17" height="17" viewBox="0 0 17 17"><circle cx="8.500" cy="8.500" r="8.500" fill="#fff" /><path d="M4.500 3l4 6.500v5M12.500 3l-4 6.500" fill="none" stroke="#ef2f24" strokeWidth="2.200" /></svg></Task>
    <Task aria-label="Калькулятор"><svg width="14" height="18" viewBox="0 0 14 18"><rect width="14" height="18" rx="1" fill="#4f7488" /><rect x="1.500" y="1.500" width="11" height="4" fill="#54cbe0" /><path d="M2 8h10M2 11h10M2 14.500h10" stroke="#d8e4ea" strokeWidth="2" strokeDasharray="2 2" /><rect x="9.500" y="10" width="3" height="6.500" fill="#244a94" /></svg></Task>
    <Task $run aria-label="Камера"><svg width="18" height="18" viewBox="0 0 18 18"><rect x="1" y="4" width="16" height="12" rx="4" fill="#51564f" /><rect x="6" y="1" width="6" height="4" fill="#6c716a" /><circle cx="10" cy="10" r="5" fill="#262927" /><circle cx="10" cy="10" r="2.500" fill="#7e8a83" /><circle cx="4" cy="11" r="2" fill="#5b8f45" /></svg></Task>
    <Task $run aria-label="Steam"><svg width="18" height="18" viewBox="0 0 18 18"><circle cx="9" cy="9" r="9" fill="#17335f" /><path d="M1 13a9 9 0 0 0 16 0l-6-4z" fill="#2372a8" /><path d="M.5 9.500l6 2.500 4.500-5" fill="none" stroke="#fff" strokeWidth="2.400" /><circle cx="6.500" cy="12" r="2.200" fill="#17335f" stroke="#fff" /><circle cx="11.500" cy="6.500" r="3" fill="#17335f" stroke="#fff" strokeWidth="1.400" /></svg></Task>
    <Task $run aria-label="OBS"><svg width="18" height="18" viewBox="0 0 18 18"><circle cx="8" cy="8" r="8" fill="#1f1c1d" /><path d="M8 3a3 3 0 0 1 2 5M4 6a3 3 0 0 0 2 5M12 9a3 3 0 0 1-5 2" fill="none" stroke="#c9c5c6" strokeWidth="1.400" /><circle cx="12.500" cy="13" r="4.500" fill="#ee1111" /></svg></Task>
    <Tray>
      <ChevronUp size={12} /><Volume2 size={13} strokeWidth={1.5} /><Monitor size={12} strokeWidth={1.5} /><span>РУС</span>
      <DateTime>6:33<br />17.03.2026</DateTime>
    </Tray>
  </Taskbar>
);

export default function App() {
  return (
    <>
      <Global />
      <Desktop>
        <BlueWindow />
        <BackWindow>
          <BackClose><X size={12} strokeWidth={1.5} /></BackClose>
          <BackThumb /><BackGreen /><BackStrip /><BackKey />
          <svg width="13" height="12" viewBox="0 0 13 12" fill="#8c9299"><path d="M8 1h2v2H8zM4 5h2v2H4zM8 5h2v2H8zM0 9h2v2H0zM4 9h2v2H4zM8 9h2v2H8z" /></svg>
        </BackWindow>
        <Browser>
          <Chrome />
          <SiteNav />
          <Body>
            <Sidebar />
            <Rail $top={282} $l={5} $r={8}><Thumb $h={207} /></Rail>
            <EventView />
            <Rail $top={13} $l={5} $r={4}><Thumb $h={204} /></Rail>
            <CouponView />
            <Rail $top={12} $l={4} $r={3}><Thumb $h={164} /></Rail>
          </Body>
          <StatusUrl>https://fon.bet/media?restorePreviousUrl=1</StatusUrl>
          <ChatButton aria-label="Чат"><ChatIcon /></ChatButton>
          <HandCursor width="17" height="24" viewBox="0 0 17 24"><path d="M4.500 3.500c0-2.500 3-2.500 3 0v7c.5-1.500 2.500-1.300 2.800.2.600-1 2.300-.8 2.500.5.800-.8 2.700-.5 2.700 1.300v4c0 3.500-2 6-5.500 6-3 0-4.500-1.500-5.500-3.500L1.200 14.500c-.8-1.500 1-2.700 2.100-1.500l1.200 1.300z" fill="#fff" stroke="#5a6270" strokeWidth=".7" /></HandCursor>
        </Browser>
        <TaskbarView />
      </Desktop>
    </>
  );
}
